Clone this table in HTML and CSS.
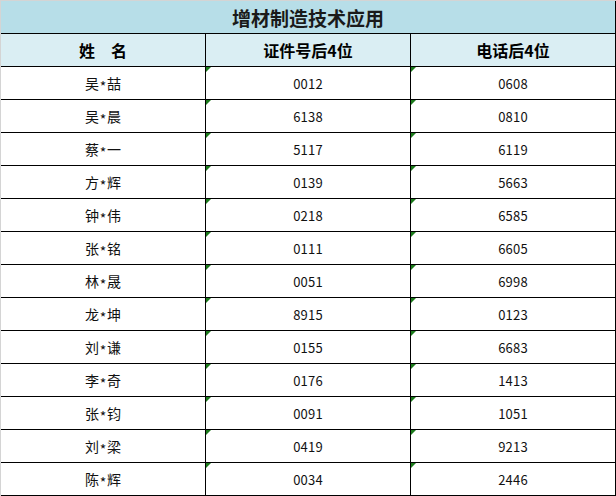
FILE: index.html
```html
<!DOCTYPE html>
<html lang="zh">
<head>
<meta charset="utf-8">
<link rel="stylesheet" href="styles.css">
</head>
<body>
<div class="sheet">
  <div class="cell title">增材制造技术应用</div>
  <div class="cell head">姓　名</div>
  <div class="cell head">证件号后4位</div>
  <div class="cell head">电话后4位</div>

  <div class="cell">吴<span class="star">*</span>喆</div><div class="cell num">0012</div><div class="cell num">0608</div>
  <div class="cell">吴<span class="star">*</span>晨</div><div class="cell num">6138</div><div class="cell num">0810</div>
  <div class="cell">蔡<span class="star">*</span>一</div><div class="cell num">5117</div><div class="cell num">6119</div>
  <div class="cell">方<span class="star">*</span>辉</div><div class="cell num">0139</div><div class="cell num">5663</div>
  <div class="cell">钟<span class="star">*</span>伟</div><div class="cell num">0218</div><div class="cell num">6585</div>
  <div class="cell">张<span class="star">*</span>铭</div><div class="cell num">0111</div><div class="cell num">6605</div>
  <div class="cell">林<span class="star">*</span>晟</div><div class="cell num">0051</div><div class="cell num">6998</div>
  <div class="cell">龙<span class="star">*</span>坤</div><div class="cell num">8915</div><div class="cell num">0123</div>
  <div class="cell">刘<span class="star">*</span>谦</div><div class="cell num">0155</div><div class="cell num">6683</div>
  <div class="cell">李<span class="star">*</span>奇</div><div class="cell num">0176</div><div class="cell num">1413</div>
  <div class="cell">张<span class="star">*</span>钧</div><div class="cell num">0091</div><div class="cell num">1051</div>
  <div class="cell">刘<span class="star">*</span>梁</div><div class="cell num">0419</div><div class="cell num">9213</div>
  <div class="cell">陈<span class="star">*</span>辉</div><div class="cell num">0034</div><div class="cell num">2446</div>
</div>
</body>
</html>
```

FILE: styles.css
```css
html, body {
  margin: 0;
  padding: 0;
  background: #d4d4d4;
}

body {
  padding: 1px 0 0 1px;
  font-family: "Noto Sans CJK SC", "Noto Sans", sans-serif;
  color: #111;
}

.sheet {
  display: grid;
  grid-template-columns: 205px 205px 205px;
  grid-auto-rows: 33px;
  width: 615px;
  background: #ffffff;
}

.cell {
  box-sizing: border-box;
  border-right: 1px solid #000;
  border-bottom: 1px solid #000;
  display: flex;
  align-items: center;
  justify-content: center;
  font-size: 14px;
  line-height: 1;
  position: relative;
}

.star {
  display: inline-block;
  width: 8px;
  text-align: center;
  transform: translateY(3px);
}

.title {
  grid-column: 1 / 4;
  background: #b7dee8;
  font-size: 19px;
  font-weight: bold;
  color: #1a1a1a;
  padding-top: 1px;
}

.head {
  background: #daeef3;
  font-size: 16px;
  font-weight: bold;
  color: #000;
}

.num {
  font-size: 13px;
  letter-spacing: 0.2px;
}

.num::before {
  content: "";
  position: absolute;
  top: 0;
  left: 0;
  width: 0;
  height: 0;
  border-top: 5px solid #1b7a1b;
  border-right: 5px solid transparent;
}
```
